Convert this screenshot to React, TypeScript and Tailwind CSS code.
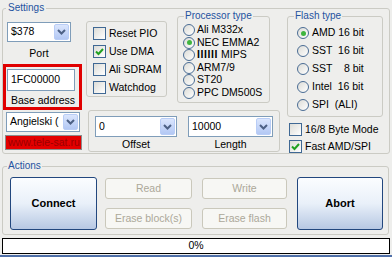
import React from "react";

function Combo({ value, className }: { value: string; className: string }) {
  return (
    <div className={`flex border border-[#7f9db9] bg-white text-[10.5px] ${className}`}>
      <span className="flex flex-1 items-center overflow-hidden whitespace-nowrap pl-[3px]">{value}</span>
      <span className="m-[1px] flex w-[15px] items-center justify-center rounded-[2px] border border-[#b9cdf6] bg-gradient-to-b from-[#dbe6fd] to-[#b3c8f4]">
        <svg width="9" height="6" viewBox="0 0 9 6">
          <path d="M1 1l3.5 3.5L8 1" stroke="#4d6185" strokeWidth="2" fill="none" />
        </svg>
      </span>
    </div>
  );
}

function Check({ checked }: { checked?: boolean }) {
  return (
    <span className="flex h-[13px] w-[13px] shrink-0 items-center justify-center border border-[#3f6894] bg-gradient-to-br from-[#dcdcd7] to-white">
      {checked ? (
        <svg width="9" height="9" viewBox="0 0 9 9">
          <path d="M1 4.5l2.5 2.5L8 2" stroke="#21a121" strokeWidth="2" fill="none" />
        </svg>
      ) : null}
    </span>
  );
}

function Radio({ checked }: { checked?: boolean }) {
  return (
    <span className="flex h-[12px] w-[12px] shrink-0 items-center justify-center rounded-full border border-[#4a6c94] bg-gradient-to-br from-[#dcdcd7] to-white">
      {checked ? <span className="h-[5px] w-[5px] rounded-full bg-[#3fb53f]" /> : null}
    </span>
  );
}

const legend = "leading-[12px] text-[10px] text-[#2452a0]";
const group = "rounded-[3px] border border-[#cbcbc4]";

export default function App() {
  const processors = ["Ali M332x", "NEC EMMA2", "MIPS", "ARM7/9", "ST20", "PPC DM500S"];
  const flashes = ["AMD 16 bit", "SST  16 bit", "SST    8 bit", "Intel  16 bit", "SPI  (ALI)"];
  const checks: Array<[string, boolean]> = [["Reset PIO", false], ["Use DMA", true], ["Ali SDRAM", false], ["Watchdog", false]];
  const disabled = "flex h-[21px] items-center justify-center rounded-[3px] border border-[#cac8bb] bg-[#f7f7f4] text-[10.5px] text-[#aca899]";
  const big = "flex h-[53px] items-center justify-center rounded-[3px] border border-[#22477e] bg-gradient-to-b from-[#fbfdff] via-[#e9f0f9] to-[#b7c8e3] text-[11px] font-bold text-black";

  return (
    <div className="h-[257px] w-[392px] overflow-hidden bg-[#eeeeec] font-['Liberation_Sans',Arial,sans-serif] text-[10px] text-black">
      <fieldset className={`mx-[2px] mt-[2px] h-[152px] w-[388px] ${group}`}>
        <legend className={`ml-[3px] px-[2px] ${legend}`}>Settings</legend>
        <div className="-mt-[4px] flex">
          {/* left column */}
          <div className="flex w-[79px] flex-col">
            <Combo value="$378" className="ml-[4px] mt-[12px] h-[20px] w-[64px]" />
            <div className="mt-[5px] w-[72px] text-center text-[10.5px] leading-[12px]">Port</div>
            <div className="mt-[5px] h-[46px] w-[79px] border-[3px] border-[#e00000] pl-[1px] pt-[2px]">
              <div className="flex h-[22px] w-[68px] items-center border border-[#7f9db9] bg-white pl-[3px] text-[10.5px]">1FC00000</div>
              <div className="mt-[3px] text-center text-[10.5px] leading-[12px]">Base address</div>
            </div>
            <Combo value="Angielski (" className="ml-[3px] mt-[2px] h-[20px] w-[74px]" />
            <div className="ml-[2px] mt-[3px] flex h-[15px] w-[77px] items-center overflow-hidden whitespace-nowrap border border-[#8c8c8c] bg-[#e40000] pl-[2px] text-[10.5px] text-[#9a0000]">
              www.tele-sat.ru
            </div>
          </div>

          {/* middle column */}
          <div className="ml-[4px] flex w-[194px] flex-col">
            <div className="flex items-start">
              <div className={`mt-[11px] h-[76px] w-[81px] pl-[6px] pt-[5px] ${group}`}>
                {checks.map(([label, on]) => (
                  <div key={label} className="flex h-[18px] items-start gap-[3px]">
                    <Check checked={on} />
                    <span className="text-[10.5px] leading-[13px]">{label}</span>
                  </div>
                ))}
              </div>
              <fieldset className={`ml-[10px] h-[93px] w-[93px] ${group}`}>
                <legend className={`ml-[6px] px-[1px] ${legend}`}>Processor type</legend>
                <div className="pl-[5px] pt-[2px]">
                  {processors.map((p, i) => (
                    <div key={p} className="flex h-[12.5px] items-center gap-[2px] text-[10.5px]">
                      <Radio checked={i === 1} />
                      {p === "MIPS" ? (
                        <span className="whitespace-pre">
                          <span className="font-bold tracking-[0.6px]">IIIIII</span> MIPS
                        </span>
                      ) : (
                        <span>{p}</span>
                      )}
                    </div>
                  ))}
                </div>
              </fieldset>
            </div>
            <div className={`ml-[2px] mt-[7px] flex h-[42px] w-[192px] pl-[6px] pt-[5px] ${group}`}>
              <div className="flex w-[82px] flex-col">
                <Combo value="0" className="h-[21px] w-[82px]" />
                <div className="mt-[1px] text-center text-[10.5px] leading-[12px]">Offset</div>
              </div>
              <div className="ml-[11px] flex w-[85px] flex-col">
                <Combo value="10000" className="h-[21px] w-[85px]" />
                <div className="mt-[1px] text-center text-[10.5px] leading-[12px]">Length</div>
              </div>
            </div>
          </div>

          {/* right column */}
          <div className="ml-[7px] flex w-[96px] flex-col">
            <fieldset className={`h-[107px] w-[96px] ${group}`}>
              <legend className={`ml-[6px] px-[1px] ${legend}`}>Flash type</legend>
              <div className="pl-[9px] pt-[2px]">
                {flashes.map((f, i) => (
                  <div key={f} className="flex h-[18px] items-center gap-[3px] text-[10.5px]">
                    <Radio checked={i === 0} />
                    <span className="whitespace-pre">{f}</span>
                  </div>
                ))}
              </div>
            </fieldset>
            <div className="ml-[2px] mt-[6px] flex h-[17px] items-start gap-[3px]">
              <Check />
              <span className="text-[10.5px] leading-[13px]">16/8 Byte Mode</span>
            </div>
            <div className="ml-[2px] flex h-[17px] items-start gap-[3px]">
              <Check checked />
              <span className="text-[10.5px] leading-[13px]">Fast AMD/SPI</span>
            </div>
          </div>
        </div>
      </fieldset>

      <fieldset className={`mx-[2px] mt-[6px] h-[75px] w-[387px] ${group}`}>
        <legend className={`ml-[4px] px-[1px] ${legend}`}>Actions</legend>
        <div className="flex pl-[7px] pt-[5px]">
          <button className={`w-[87px] ${big}`}>Connect</button>
          <div className="ml-[8px] flex w-[87px] flex-col">
            <button className={`mt-[1px] ${disabled}`}>Read</button>
            <button className={`mt-[9px] ${disabled}`}>Erase block(s)</button>
          </div>
          <div className="ml-[10px] flex w-[85px] flex-col">
            <button className={`mt-[1px] ${disabled}`}>Write</button>
            <button className={`mt-[9px] ${disabled}`}>Erase flash</button>
          </div>
          <button className={`ml-[10px] w-[86px] ${big}`}>Abort</button>
        </div>
      </fieldset>

      <div className="mx-[2px] mt-[3px] flex h-[16px] w-[388px] items-center justify-center border border-black bg-white text-[10.5px]">0%</div>
      <div className="mt-[1px] h-[2px] bg-[#4f6fa8]" />
    </div>
  );
}
